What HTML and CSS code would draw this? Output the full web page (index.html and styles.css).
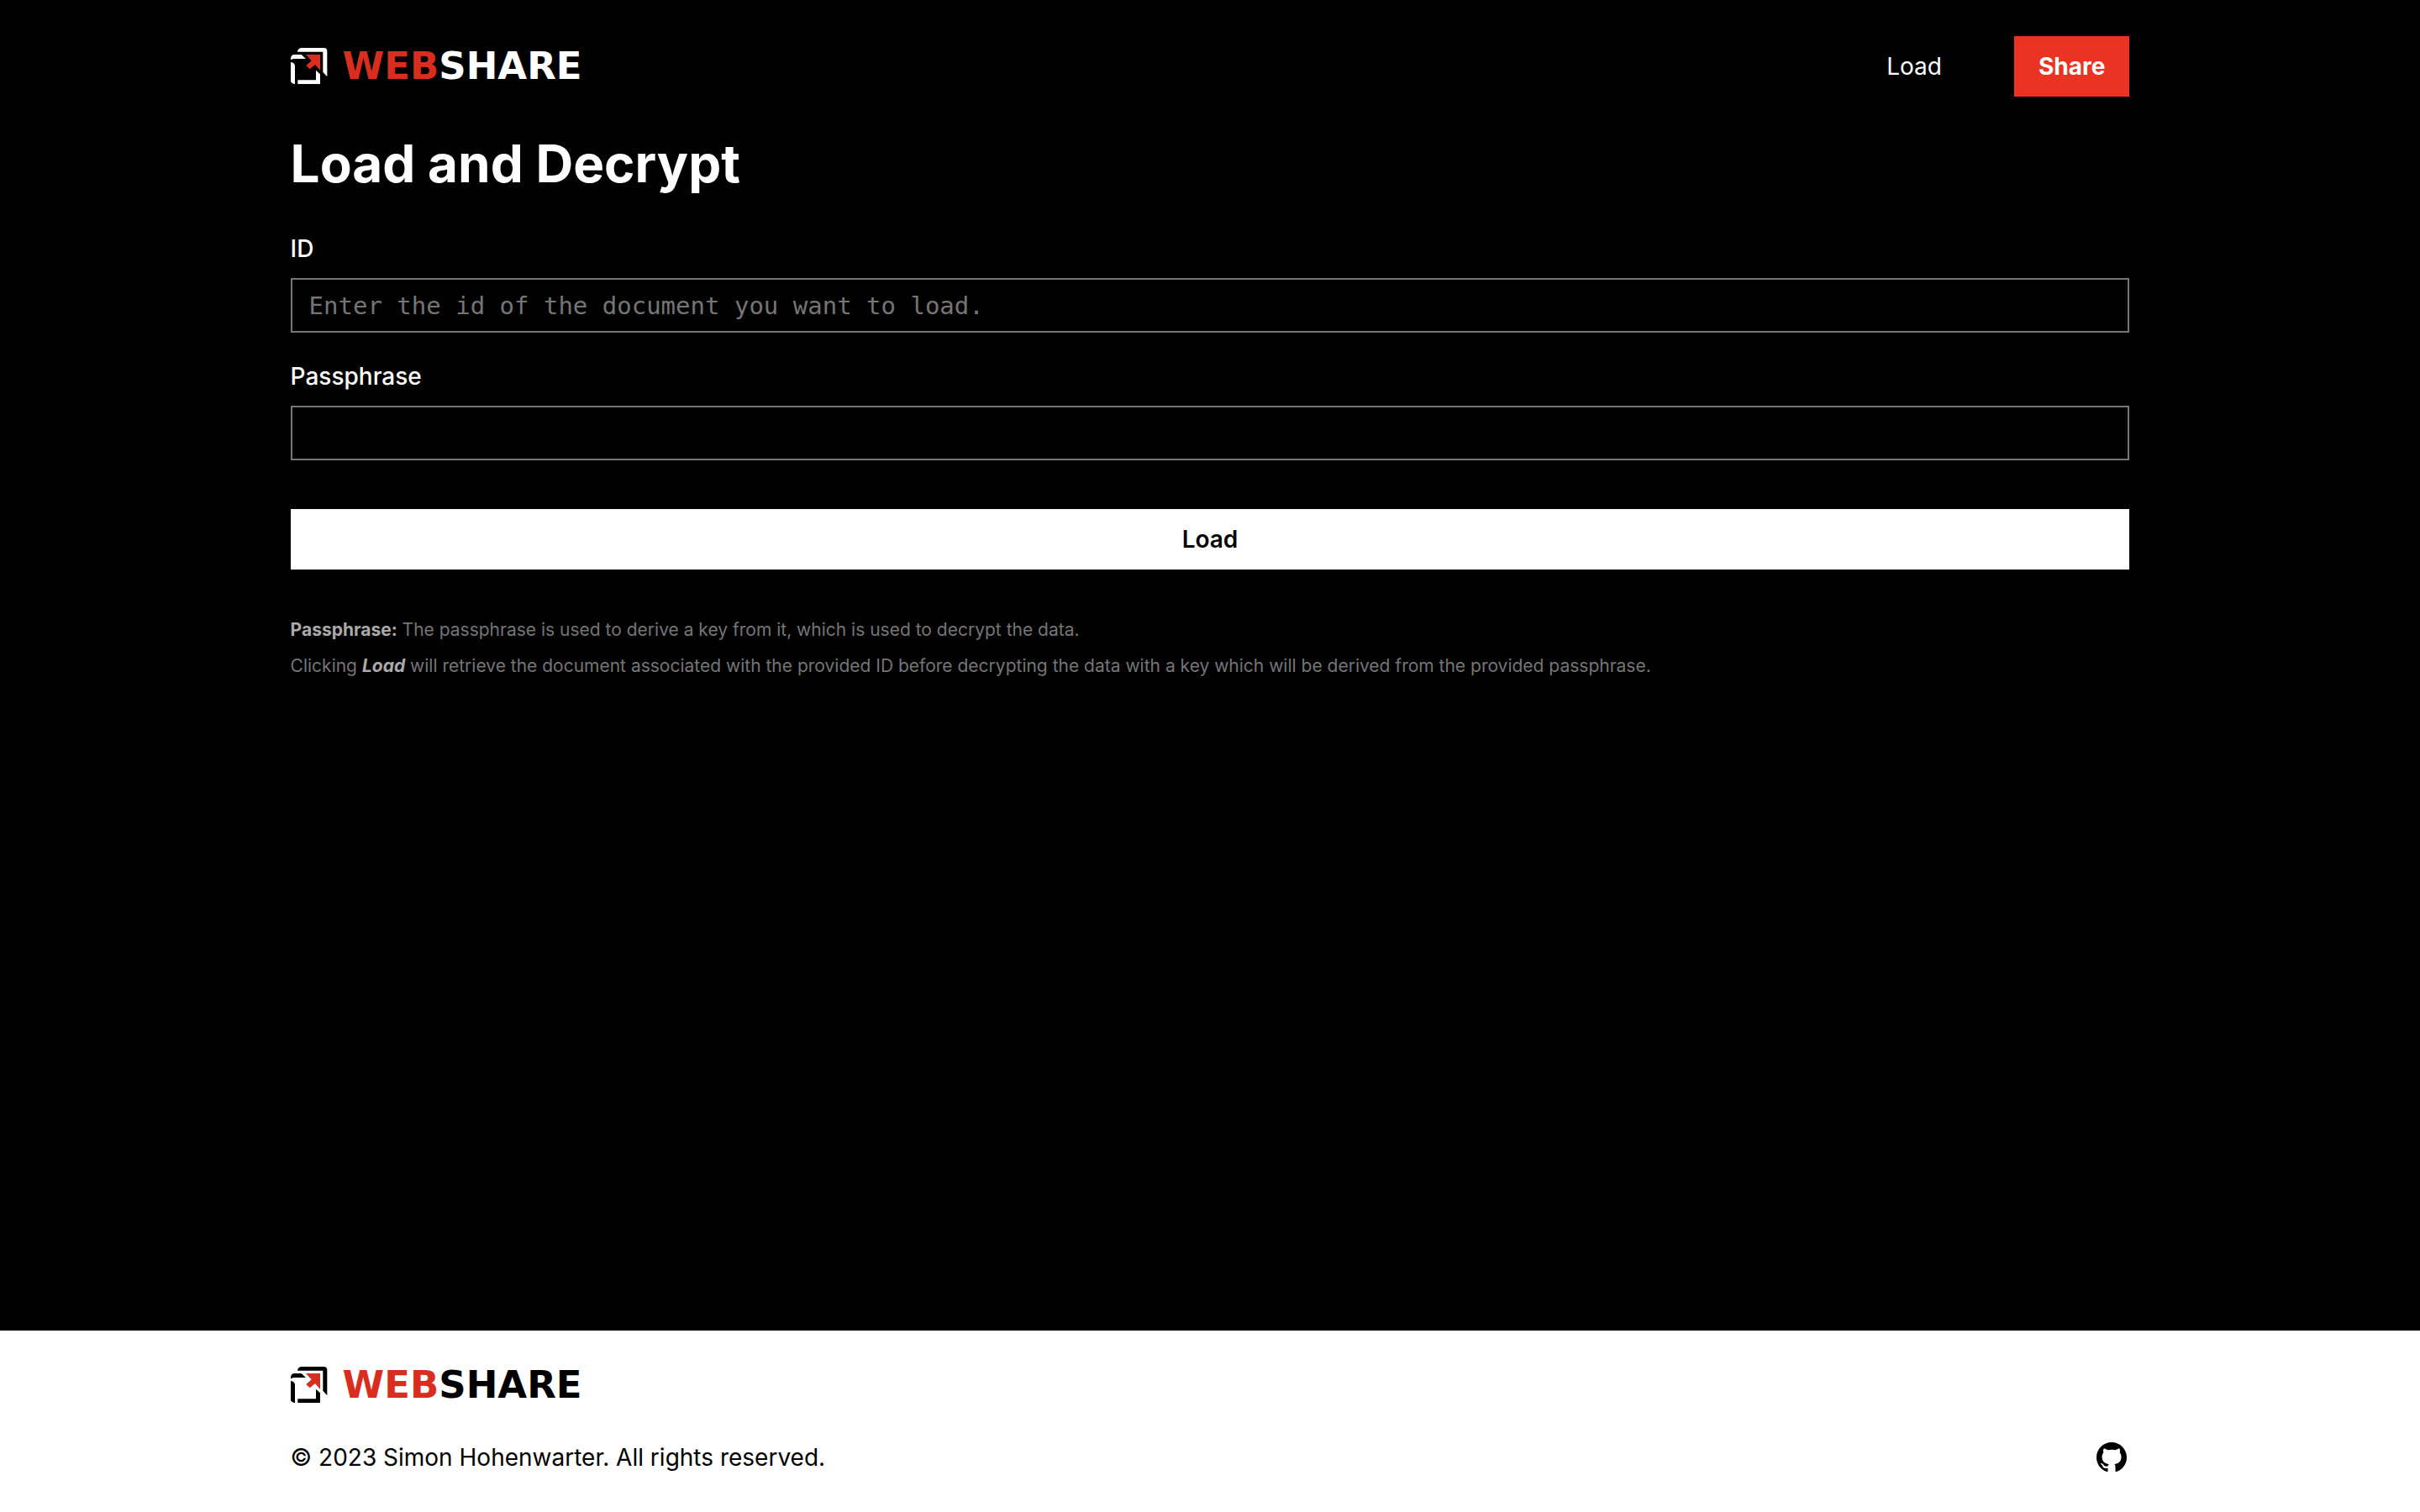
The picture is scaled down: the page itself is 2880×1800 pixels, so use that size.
FILE: index.html
```
<!DOCTYPE html>
<html lang="en">
<head>
<meta charset="utf-8">
<meta name="viewport" content="width=device-width, initial-scale=1">
<title>Webshare</title>
<link rel="stylesheet" href="styles.css">
</head>
<body>
<svg class="symbols" aria-hidden="true">
  <symbol id="mark" viewBox="0 0 132 132">
    <path fill="currentColor" d="M24 14Q26 0 40 0H118Q130 0 130 12V103L115 86V14Z"/>
    <path fill="currentColor" d="M0 40Q0 24 14 24H38L54 39H14Q6 39 0 43Z"/>
    <path fill="currentColor" d="M0 51Q15 52 15 66V129H12Q0 126 0 118Z"/>
    <path fill="currentColor" d="M25 115H90V80L105 94V129H25Z"/>
    <path class="mark-arrow" d="M54 24H105V80L87 60L68 76L55 63L74 46Z"/>
  </symbol>
</svg>
<header class="header">
  <a class="logo" href="#">
    <svg class="logo-mark" aria-hidden="true"><use href="#mark"/></svg>
    <span class="logo-name"><span class="logo-accent">WEB</span>SHARE</span>
  </a>
  <nav class="nav">
    <a class="nav-link" href="#">Load</a>
    <a class="nav-share" href="#">Share</a>
  </nav>
</header>
<main class="main">
  <h1 class="title">Load and Decrypt</h1>
  <form class="form">
    <div class="form-group">
      <label class="label" for="doc-id">ID</label>
      <input class="field" id="doc-id" type="text" placeholder="Enter the id of the document you want to load.">
    </div>
    <div class="form-group">
      <label class="label" for="passphrase">Passphrase</label>
      <input class="field" id="passphrase" type="password">
    </div>
    <button class="submit" type="submit">Load</button>
  </form>
  <div class="notes">
    <p class="note"><strong>Passphrase:</strong> The passphrase is used to derive a key from it, which is used to decrypt the data.</p>
    <p class="note">Clicking <strong><em>Load</em></strong> will retrieve the document associated with the provided ID before decrypting the data with a key which will be derived from the provided passphrase.</p>
  </div>
</main>
<footer class="footer">
  <a class="logo" href="#">
    <svg class="logo-mark" aria-hidden="true"><use href="#mark"/></svg>
    <span class="logo-name"><span class="logo-accent">WEB</span>SHARE</span>
  </a>
  <div class="footer-row">
    <p class="copyright">© 2023 Simon Hohenwarter. All rights reserved.</p>
    <a class="github" href="#" aria-label="GitHub">
      <svg class="github-icon" viewBox="0 0 16 16" aria-hidden="true"><path fill="currentColor" d="M8 0C3.58 0 0 3.58 0 8c0 3.54 2.29 6.53 5.47 7.59.4.07.55-.17.55-.38 0-.19-.01-.82-.01-1.49-2.01.37-2.53-.49-2.69-.94-.09-.23-.48-.94-.82-1.13-.28-.15-.68-.52-.01-.53.63-.01 1.08.58 1.23.82.72 1.21 1.87.87 2.33.66.07-.52.28-.87.51-1.07-1.78-.2-3.64-.89-3.64-3.95 0-.87.31-1.59.82-2.15-.08-.2-.36-1.02.08-2.12 0 0 .67-.21 2.2.82.64-.18 1.32-.27 2-.27s1.36.09 2 .27c1.53-1.04 2.2-.82 2.2-.82.44 1.1.16 1.92.08 2.12.51.56.82 1.27.82 2.15 0 3.07-1.87 3.75-3.65 3.95.29.25.54.73.54 1.48 0 1.07-.01 1.93-.01 2.2 0 .21.15.46.55.38A8.01 8.01 0 0 0 16 8c0-4.42-3.58-8-8-8z"/></svg>
    </a>
  </div>
</footer>
</body>
</html>
```

FILE: styles.css
```
* { box-sizing: border-box; }

body {
  margin: 0;
  min-height: 100vh;
  display: flex;
  flex-direction: column;
  background: #000;
  color: #fff;
  font-family: Inter, "Liberation Sans", sans-serif;
  font-size: 28px;
  line-height: 36px;
}

a { color: inherit; text-decoration: none; }
h1, p { margin: 0; }

.symbols { display: none; }
.mark-arrow { fill: #d92d20; }

.header, .main, .footer { padding-inline: 12%; }

.header {
  display: flex;
  justify-content: space-between;
  align-items: center;
  padding-top: 43px;
}

.logo {
  display: flex;
  align-items: center;
  gap: 18px;
}
.logo-mark { width: 44px; height: 44px; }
.logo-name {
  font-family: "DejaVu Sans", sans-serif;
  font-size: 45px;
  font-weight: 700;
  line-height: 44px;
}
.logo-accent { color: #d92d20; }

.nav {
  display: flex;
  align-items: center;
  gap: 86px;
}
.nav-share {
  padding: 18px 29px;
  background: #eb3323;
  font-weight: 700;
}

.main { flex: 1; }

.title {
  margin-top: 40px;
  font-size: 62px;
  font-weight: 700;
  line-height: 80px;
}

.form {
  display: flex;
  flex-direction: column;
  gap: 34px;
  margin-top: 43px;
}
.form-group {
  display: flex;
  flex-direction: column;
  gap: 17px;
}
.label { font-weight: 500; }
.field {
  height: 65px;
  padding: 0 20px;
  border: 2px solid #767676;
  border-radius: 0;
  background: #000;
  color: #fff;
  font-family: "DejaVu Sans Mono", monospace;
  font-size: 29px;
}
.field::placeholder { color: #757575; opacity: 1; }

.submit {
  margin-top: 24px;
  padding: 18px;
  border: 0;
  background: #fff;
  color: #000;
  font: inherit;
  font-weight: 600;
}

.notes {
  display: grid;
  gap: 7px;
  margin-top: 54px;
}
.note {
  color: #757575;
  font-size: 21px;
}
.note strong { color: #aaa; }

.footer {
  padding-block: 43px 47px;
  background: #fff;
  color: #000;
}
.footer-row {
  display: flex;
  justify-content: space-between;
  align-items: center;
  margin-top: 46px;
}
.github { padding-right: 3px; }
.github-icon { display: block; width: 36px; height: 36px; }
```
